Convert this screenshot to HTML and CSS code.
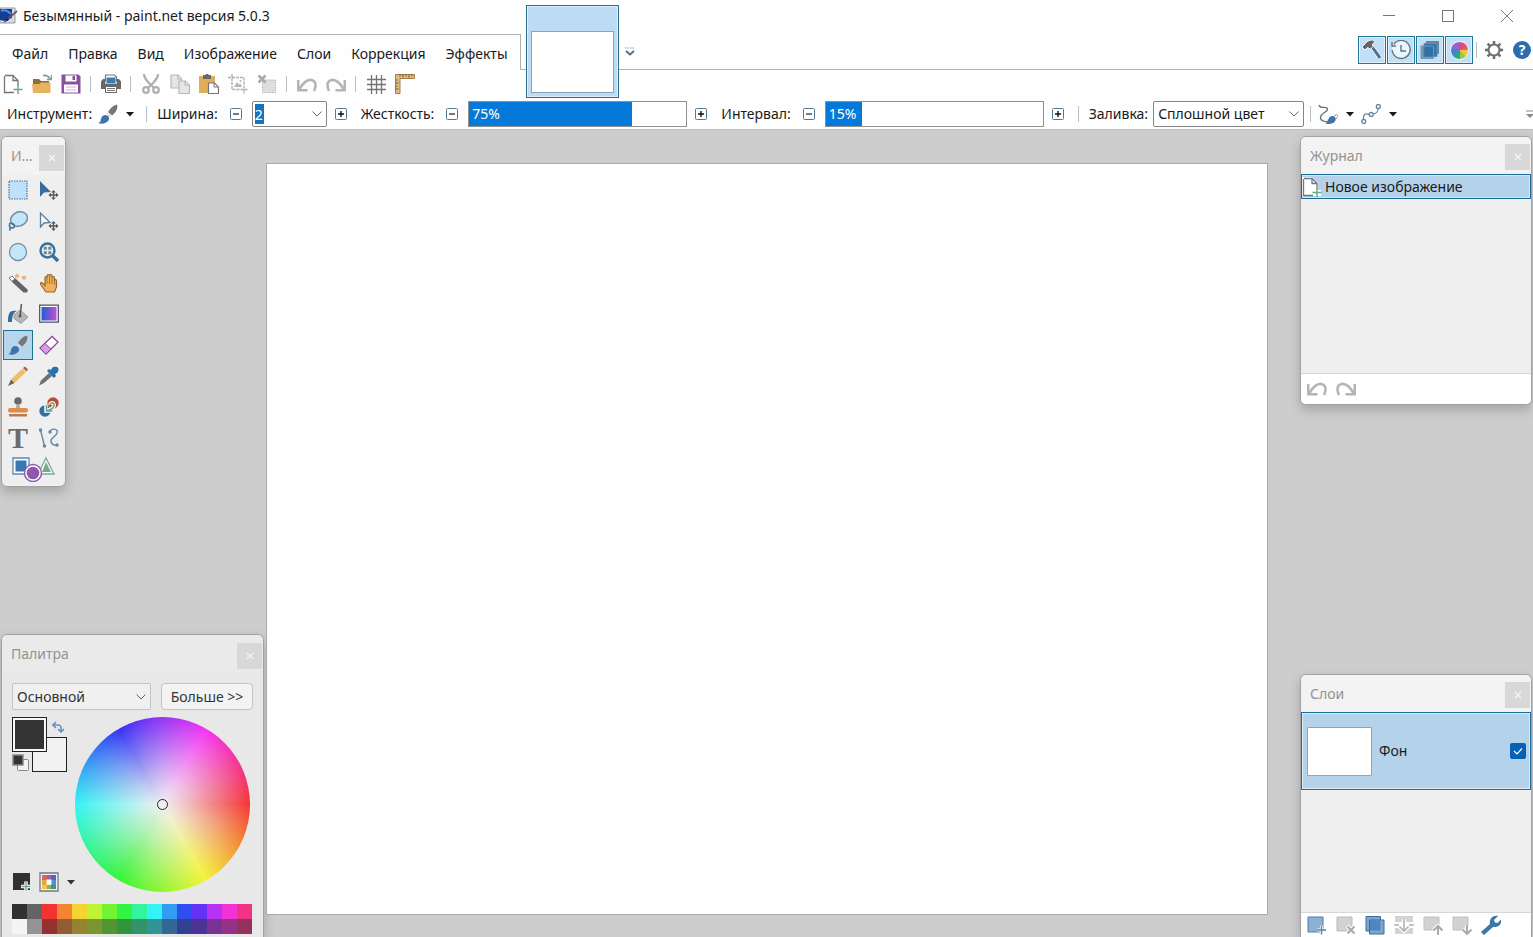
FILE: index.html
```html
<!DOCTYPE html>
<html lang="ru">
<head>
<meta charset="utf-8">
<title>Безымянный - paint.net версия 5.0.3</title>
<link rel="stylesheet" href="styles.css">
</head>
<body>
<svg class="sprite" aria-hidden="true">
  <symbol id="i-new" viewBox="0 0 20 20"><path d="M2 1.500h8l5 5v5M11 18.500H1.500V2" fill="none" stroke="#737679" stroke-width="1.300"/><path d="M10 1.500v5h5" fill="none" stroke="#737679" stroke-width="1.300"/><path d="M15 11v9M10.500 15.500h9" stroke="#67a88c" stroke-width="1.400"/></symbol>
  <symbol id="i-open" viewBox="0 0 20 20"><path d="M1 5h6l2 2h8v11H1z" fill="#8b6f3c"/><path d="M0 10h7l2-1.500h9.500V19H1z" fill="#e6b45e"/><path d="M11 1.500c3-.5 5.500.5 7 3.500M19.500 1v4.500H15" fill="none" stroke="#67a88c" stroke-width="1.500"/></symbol>
  <symbol id="i-save" viewBox="0 0 20 20"><path d="M.5.500h17l2 2v17H.5z" fill="#8a519b"/><path d="M4.500 1.500h11v6h-11zM3 10.500h14v8H3z" fill="#fff"/><path d="M11.500 2h2.500v4h-2.500z" fill="#8a519b"/><path d="M5 13h10M5 16h10" stroke="#c9b2d0"/></symbol>
  <symbol id="i-print" viewBox="0 0 20 20"><path d="M4.500 8V1h9l2 2v5" fill="#fff" stroke="#777" stroke-width="1.200"/><path d="M5.500 3.500h9V9h-9z" fill="#3a7bb4"/><path d="M0 7.500 2 5h2v4.500h12V5h2l2 2.500V15H0z" fill="#686868"/><path d="M4.500 12.500h11v6h-11z" fill="#fff" stroke="#686868"/><path d="M6 14.500h8M6 16.500h8" stroke="#777"/></symbol>
  <symbol id="i-cut" viewBox="0 0 20 20"><g fill="none" stroke="#b0b0b0" stroke-width="2.200"><path d="M3 0c0 5 4 8 9.500 13.500M17 0c0 5-4 8-9.500 13.500"/><circle cx="5" cy="16" r="2.800"/><circle cx="15" cy="16" r="2.800"/></g></symbol>
  <symbol id="i-copy" viewBox="0 0 20 20"><g fill="#e6e6e6" stroke="#b8b8b8" stroke-width="1.200"><path d="M1 1h7l3.500 3.500V14H1z"/><path d="M8 1v4h4M9 7h6.500l4 4v8.500H9z"/><path d="M15 7v4h4"/></g></symbol>
  <symbol id="i-paste" viewBox="0 0 20 20"><path d="M0 2h16v17H0z" fill="#e2ad5a"/><path d="M4 1h2.500a1.500 1.500 0 0 1 3 0H12v4H4z" fill="#696969"/><path d="M9.500 9h6l4 4v6.500h-10z" fill="#fff" stroke="#737679" stroke-width="1.200"/><path d="M15 9v4h4" fill="none" stroke="#737679"/></symbol>
  <symbol id="i-crop" viewBox="0 0 20 20"><path d="M4 0v15.500h16M0 3.500h16V20" fill="none" stroke="#b0b0b0" stroke-width="1.400" stroke-dasharray="3 1"/><path d="m6 13 3-5 2 3 1-2 2 4z" fill="#b4b4b4"/><circle cx="12.500" cy="7" r="1" fill="#b4b4b4"/></symbol>
  <symbol id="i-desel" viewBox="0 0 20 20"><path d="M5.500 6h13v12.500h-13z" fill="#dedede" stroke="#b2b2b2" stroke-dasharray="1.500 1"/><path d="m1.500 1.500 7 7m0-7-7 7" stroke="#aaa" stroke-width="2.500"/></symbol>
  <symbol id="i-undo" viewBox="0 0 20 20"><path d="M1.200 6v10.300h9.300M2 15.500C6 9 10 5 14.500 6c4.500 1 5 5.500 2.500 11" fill="none" stroke="#b5b5b5" stroke-width="2.600"/></symbol>
  <symbol id="i-redo" viewBox="0 0 20 20"><path d="M18.800 6v10.300H9.500M18 15.500C14 9 10 5 5.500 6 1 7 .5 11.500 3 17" fill="none" stroke="#b5b5b5" stroke-width="2.600"/></symbol>
  <symbol id="i-grid" viewBox="0 0 20 20"><path d="M5.500 1v19M10.500 1v19M15.500 1v19M1 5.500h19M1 10.500h19M1 15.500h19" stroke="#737373" stroke-width="1.300"/></symbol>
  <symbol id="i-ruler" viewBox="0 0 20 20"><path d="M.5.500h19v4H5v15H.5z" fill="#dfbd83" stroke="#a87d4b"/><path d="M5 .5v2M8 .5v3M11 .5v2M14 .5v3M17 .5v2M.5 6h2M.5 9h3M.5 12h2M.5 15h3" stroke="#765736"/></symbol>
  <symbol id="i-brush" viewBox="0 0 20 20"><path d="M19 .5c1.500 4-2 9-5 11L10 8C12 4.500 15 1.500 19 .5z" fill="#777"/><path d="m9.500 9 3.500 3-1 1-3.500-3z" fill="#d7d7d7"/><path d="M7.500 11c3.500.5 4.500 3 3 5.500C8.500 19.500 4 20.500 0 19c2.500-.5 2.500-2 3-4 .7-2.500 2-4 4.500-4z" fill="#3f73ab"/></symbol>
  <symbol id="i-minus" viewBox="0 0 12 12"><rect x=".5" y=".5" width="11" height="11" rx="1" fill="#fff" stroke="#58788f"/><path d="M3 6h6" stroke="#222" stroke-width="1.200"/></symbol>
  <symbol id="i-plus" viewBox="0 0 12 12"><rect x=".5" y=".5" width="11" height="11" rx="1" fill="#fff" stroke="#58788f"/><path d="M3 6h6M6 3v6" stroke="#111" stroke-width="1.400"/></symbol>
  <symbol id="i-arrow" viewBox="0 0 8 5"><path d="M0 0h8L4 4.500z" fill="currentColor"/></symbol>
  <symbol id="i-chev" viewBox="0 0 10 6"><path d="m.5.500 4.500 4.500L9.500.500" fill="none" stroke="#666"/></symbol>
  <symbol id="i-smooth" viewBox="0 0 20 20"><path d="M1 1c1 5 8 0 8.500 4C10 8 3 9 2.500 13S7 18 10 17.500" fill="none" stroke="#677780" stroke-width="1.300"/><path d="M7 19.500c4-1 2.500-7 7-7.500 4-.2 5 4 2 6.500-2 1.500-6 2-9 1z" fill="#3f73a9"/><path d="m16 12 2.500-1.500 1.500 2-2 2.500" fill="none" stroke="#8a9aa5"/></symbol>
  <symbol id="i-curve" viewBox="0 0 20 20"><g fill="none" stroke="#6287a9" stroke-width="1.300"><path d="M2.500 16C2 6 8 11.500 10 10.500s7.500 0 7-6.500"/><circle cx="17.300" cy="2.500" r="2"/><circle cx="10.200" cy="10.500" r="2" fill="#fff"/><circle cx="2.700" cy="17.500" r="2" fill="#fff"/></g></symbol>
  <symbol id="i-hammer" viewBox="0 0 20 20"><path d="m8 7 3-2 8 11c1 2-1.500 4-3 2.500z" fill="#4d7396" stroke="#edf6fc"/><path d="m10 5 3-3.500L10.500 0C7 0 4.500 1.500 3 4L0 7l3 3 2.500-2.500L8.500 9l3-3z" fill="#656565" stroke="#edf6fc"/></symbol>
  <symbol id="i-history" viewBox="0 0 20 20"><circle cx="10" cy="10" r="9" fill="#e9f6fd"/><path d="M3 4a9 9 0 1 1-1.800 6M1 2v4h4M10 5v6h5" fill="none" stroke="#68747a" stroke-width="1.400"/></symbol>
  <symbol id="i-layers" viewBox="0 0 20 20"><path d="M6 1h13v13H6z" fill="#6d8493"/><path d="M4 3.500h13v13H4z" fill="#2f74b3" stroke="#5d8eb5"/><path d="M1 6h12.500v12.500H1z" fill="#386e9b" fill-opacity=".6" stroke="#6d98bb"/></symbol>
  <symbol id="i-gear" viewBox="0 0 20 20"><g fill="none" stroke="#6c6c6c"><circle cx="10" cy="10" r="5.500" stroke-width="2"/><path d="M10 1v3M10 16v3M1 10h3M16 10h3M3.600 3.600l2.200 2.200M14.200 14.200l2.200 2.200M3.600 16.400l2.200-2.200M14.200 5.800l2.200-2.200" stroke-width="2.500"/></g></symbol>
  <symbol id="i-rect" viewBox="0 0 20 20"><path d="M1 1h18v18H1z" fill="#bfe1fb" stroke="#4c7394" stroke-width="1.200" stroke-dasharray="1.500 1"/></symbol>
  <symbol id="i-lasso" viewBox="0 0 20 20"><ellipse cx="11" cy="8" rx="8.700" ry="7" transform="rotate(-25 11 8)" fill="#c4e6fb" stroke="#7892a5" stroke-width="1.600"/><path d="M1.500 19.500c1.500-2 .5-4-.5-5.500M1 13.500c2-2 5.500-1 5.500 1.500 0 2-3 2.500-4.500 1" fill="none" stroke="#467499" stroke-width="1.700"/></symbol>
  <symbol id="i-ellipse" viewBox="0 0 20 20"><circle cx="10" cy="10" r="8.500" fill="#c4e6fb" stroke="#7892a5" stroke-width="1.300"/></symbol>
  <symbol id="i-cross" viewBox="0 0 20 20"><path d="M14.500 11v8M10.500 15h8" stroke="#555" stroke-width="1.300"/><path d="m14.500 10 2.300 2.500h-4.600zM14.500 20l2.300-2.500h-4.600zM9.500 15l2.500-2.300v4.600zM19.500 15 17 12.700v4.600z" fill="#555"/></symbol>
  <symbol id="i-move" viewBox="0 0 20 20"><path d="M1 1v16l4-4.500 7-.5z" fill="#376c9f"/><use href="#i-cross"/></symbol>
  <symbol id="i-movesel" viewBox="0 0 20 20"><path d="M1.500 2v14L5 12l6-.5z" fill="#f4fafe" stroke="#5a7f9e" stroke-width="1.300"/><use href="#i-cross"/></symbol>
  <symbol id="i-zoom" viewBox="0 0 20 20"><path d="m13 13 6 6" stroke="#36719f" stroke-width="3.400"/><circle cx="8.500" cy="8.500" r="7" fill="#e4edf2" stroke="#36719f" stroke-width="2.400"/><path d="M4.800 4.800h3v3h-3zM9.300 4.800h3v3h-3zM4.800 9.300h3v3h-3zM9.300 9.300h3v3h-3z" fill="#74858f"/></symbol>
  <symbol id="i-wand" viewBox="0 0 20 20"><path d="m1 5 3-2 3 3-3 2.500z" fill="#fff" stroke="#777"/><path d="m3.500 8.500 4-3L20 17l-1 2.500h-3.500z" fill="#646464"/><path d="m9 0 1 2h2l-1.500 1.300.5 2L9 4.200l-2 1.100.5-2L6 2h2zM16 2l.8 1.600h2l-1.300 1.300.5 2-2-1-2 1 .5-2L13 3.600h2z" fill="#e5af65"/></symbol>
  <symbol id="i-hand" viewBox="0 0 20 20"><path d="M7 19 2 12c-1.500-2 .5-3.500 2-1.500l2 2V5c0-2 2-2 2 0V3c0-2 2.500-2 2.500 0v0c0-2 2.500-2 2.500 0v2c0-2 2.500-2 2.500 0v3c0-2 2-2 2 0v6l-2 5z" fill="#f0b35c" stroke="#98672f" stroke-width="1.200"/><path d="M8 5v6M10.500 3v8M13 5v6M15.500 8v4" stroke="#a97336"/></symbol>
  <symbol id="i-fill" viewBox="0 0 20 20"><path d="m6 11 6-5 8 7-7 6.500-7-5z" fill="#b6b6b6" stroke="#999"/><path d="M13.500 0 12 12" stroke="#555" stroke-width="1.500"/><circle cx="12" cy="12" r="1.500" fill="#555"/><path d="M0 18C0 8 2 6 9 7c-4 2-4.500 4-5 11z" fill="#376c9f"/></symbol>
  <symbol id="i-gradient" viewBox="0 0 20 20"><linearGradient id="g-tool"><stop stop-color="#1e5ed2"/><stop offset="1" stop-color="#c64ed3"/></linearGradient><path d="M.7 1.200h18.600v17H.7z" fill="#fff" stroke="#50516a" stroke-width="1.300"/><path d="M2.500 3h15v13.500h-15z" fill="url(#g-tool)"/></symbol>
  <symbol id="i-eraser" viewBox="0 0 20 20"><path d="M1 13 13 1.500l6 5.500L7 19z" fill="#fff" stroke="#894d9d" stroke-width="1.300"/><path d="m1 13 5-4.500 6 5.500-5 5z" fill="#d79be4" stroke="#894d9d"/></symbol>
  <symbol id="i-pencil" viewBox="0 0 20 20"><path d="M3 13.500 14.500 2.500 18 6 6.500 17z" fill="#ecbd6c"/><path d="M15 2 17 .5 20 3.500 18.500 5.500z" fill="#ac6050"/><path d="M3 13.500 0 20l6.500-3z" fill="#6b6257"/></symbol>
  <symbol id="i-picker" viewBox="0 0 20 20"><path d="m0 19.500 2-5L10 7l3 3-8 7z" fill="#6b7074"/><path d="m8 5 2-2 2 1c1-3 3-4 6-3 2 1 2 4 0 6l-2 1 1 2-2 2z" fill="#2f6fa7"/></symbol>
  <symbol id="i-stamp" viewBox="0 0 20 20"><circle cx="10" cy="4" r="3.800" fill="#696969"/><path d="M8.500 7h3l.5 5H8z" fill="#aaa"/><rect y="11" width="20" height="4.500" rx="2" fill="#df8c49"/><path d="M1 17h18v2.500H1z" fill="#b97953"/></symbol>
  <symbol id="i-recolor" viewBox="0 0 20 20"><circle cx="14" cy="6" r="5.700" fill="#bd4b32"/><circle cx="6" cy="14" r="5.700" fill="#326fa8"/><path d="M7 8v6h6M7 14c6-2 9-4 8-7-1-2-4-1-4 1" fill="none" stroke="#fff" stroke-width="3.500"/><path d="M7.500 8v6h6M7.500 14c6-2 8.500-4 7.500-7-1-2-4-1-4 1" fill="none" stroke="#69a58a" stroke-width="1.600"/></symbol>
  <symbol id="i-line" viewBox="0 0 20 20"><g fill="none" stroke="#6087ae" stroke-width="1.400"><path d="m1.500 2 4 16M11 4c0-4 9-4 7 1-1 4-6 4-6 8 0 4 5 5 7 4"/><circle cx="1.500" cy="2" r="1"/><circle cx="5.500" cy="18" r="1"/><circle cx="11" cy="4" r="1"/><circle cx="18" cy="17" r="1"/></g></symbol>
  <symbol id="i-shapes" viewBox="0 0 44 26"><path d="M1 2h16v16H1z" fill="#fff" stroke="#5989b2" stroke-width="1.300"/><path d="M3.500 4.500h11v11h-11z" fill="#3977b0"/><path d="m34 2 8 16H26z" fill="#fff" stroke="#75ac8f" stroke-width="1.300"/><path d="m34 6 5 10h-9z" fill="#74ac8c"/><circle cx="21" cy="17" r="8.500" fill="#fff" stroke="#925cab" stroke-width="1.500"/><circle cx="21" cy="17" r="6.300" fill="#8e58ad"/></symbol>
  <symbol id="i-swap" viewBox="0 0 12 12"><path d="M1 4h5q3 0 3 3v4M4 1 1 4l3 3M6 8l3 3 3-3" fill="none" stroke="#6a91bd" stroke-width="1.600"/></symbol>
  <symbol id="i-x" viewBox="0 0 8 8"><path d="m1 1 6 6m0-6-6 6" stroke="#f5f5f5" stroke-width="1.200"/></symbol>
  <symbol id="i-ladd" viewBox="0 0 20 20"><path d="M1 2h15v15H1z" fill="#8cb1d5" stroke="#4c7ca8"/><path d="M14.500 10.500v9M10 15h9" stroke="#fff" stroke-width="3"/><path d="M14.500 10.500v9M10 15h9" stroke="#5a83a3" stroke-width="1.400"/></symbol>
  <symbol id="i-ldel" viewBox="0 0 20 20"><path d="M1 2h15v14H1z" fill="#d2d2d2" stroke="#bbb"/><path d="m11 11 8 8m0-8-8 8" stroke="#fff" stroke-width="4"/><path d="m11.500 11.500 7 7m0-7-7 7" stroke="#aaa" stroke-width="2.200"/></symbol>
  <symbol id="i-ldup" viewBox="0 0 20 20"><path d="M1 1.500h14.500V16H1z" fill="#7fa5cc" stroke="#356e9f"/><path d="M4.500 5H19v14H4.500z" fill="#7fa5cc" stroke="#356e9f"/><path d="M5 5.500h10.500v10H5z" fill="#4f86c0"/></symbol>
  <symbol id="i-lmerge" viewBox="0 0 20 20"><path d="M1 1h18v6H1zM1 13h18v6H1z" fill="#d4d4d4"/><path d="M10 4v12M5.500 11.500 10 16l4.500-4.500" fill="none" stroke="#fff" stroke-width="4"/><path d="M10 4v12M5.500 11.500 10 16l4.500-4.500M0 10h5M15 10h5" fill="none" stroke="#b0b0b0" stroke-width="1.600"/></symbol>
  <symbol id="i-lup" viewBox="0 0 20 20"><path d="M1 2h15v13H1z" fill="#d2d2d2" stroke="#c0c0c0"/><path d="M15 20v-8m-4.500 3.500L15 11l4.500 4.500" fill="none" stroke="#fff" stroke-width="4"/><path d="M15 20v-8m-4.500 3.500L15 11l4.500 4.500" fill="none" stroke="#aaa" stroke-width="2"/></symbol>
  <symbol id="i-ldown" viewBox="0 0 20 20"><path d="M1 2h15v13H1z" fill="#d2d2d2" stroke="#c0c0c0"/><path d="M15 10v8m-4.500-3.500L15 19l4.500-4.500" fill="none" stroke="#fff" stroke-width="4"/><path d="M15 10v8m-4.500-3.500L15 19l4.500-4.500" fill="none" stroke="#aaa" stroke-width="2"/></symbol>
  <symbol id="i-wrench" viewBox="0 0 20 20"><path d="M0 17 9 9C8 5 11 0 17 1l-4 4 1 2.500 2.500.5L20 4.500c1 5-3 8-8 7.500L3 20z" fill="#3b76a9"/></symbol>
</svg>

<header class="chrome">
  <div class="titlebar">
    <svg class="logo" viewBox="0 0 18 18"><path d="M0 1h15v15H0z" fill="#d8dce8" stroke="#999"/><path d="M0 2h12v9L4 14l-4-1z" fill="#123f96"/><path d="M1 4c4-2 7 0 10 3" fill="none" stroke="#4d91dd" stroke-width="2"/><path d="m17 4-9 8" stroke="#765263" stroke-width="1.800"/><path d="m8 11-5 5 6-3z" fill="#111c38"/></svg>
    <h1 class="title">Безымянный - paint.net версия 5.0.3</h1>
    <div class="window-buttons">
      <button aria-label="Свернуть"><svg viewBox="0 0 12 12"><path d="M0 5.500h12" stroke="#777"/></svg></button>
      <button aria-label="Развернуть"><svg viewBox="0 0 12 12"><rect x=".5" y=".5" width="11" height="11" fill="none" stroke="#777"/></svg></button>
      <button aria-label="Закрыть"><svg viewBox="0 0 12 12"><path d="m0 0 12 12m0-12L0 12" stroke="#777"/></svg></button>
    </div>
  </div>
  <div class="menurow">
    <nav class="menu">
      <button>Файл</button><button>Правка</button><button>Вид</button><button>Изображение</button><button>Слои</button><button>Коррекция</button><button>Эффекты</button>
    </nav>
    <div class="docs">
      <button class="doc-thumb" aria-label="Безымянный"><span></span></button>
      <button class="doc-list" aria-label="Список изображений"><svg viewBox="0 0 10 10"><path d="M0 1h10" stroke="#8a9aa6" stroke-dasharray="1.500 1"/><path d="m1 4 4 3.500L9 4" fill="none" stroke="#4f6f86" stroke-width="1.800"/></svg></button>
      <div class="toggles">
        <button class="toggle" aria-label="Инструменты"><svg class="icon"><use href="#i-hammer"/></svg></button>
        <button class="toggle" aria-label="Журнал"><svg class="icon"><use href="#i-history"/></svg></button>
        <button class="toggle" aria-label="Слои"><svg class="icon"><use href="#i-layers"/></svg></button>
        <button class="toggle" aria-label="Палитра"><span class="wheel-icon"></span></button>
        <span class="sep"></span>
        <button class="plain" aria-label="Настройки"><svg class="icon"><use href="#i-gear"/></svg></button>
        <button class="plain help" aria-label="Справка">?</button>
      </div>
    </div>
  </div>
  <div class="toolbar">
    <button aria-label="Создать"><svg class="icon"><use href="#i-new"/></svg></button>
    <button aria-label="Открыть"><svg class="icon"><use href="#i-open"/></svg></button>
    <button aria-label="Сохранить"><svg class="icon"><use href="#i-save"/></svg></button>
    <span class="sep"></span>
    <button aria-label="Печать"><svg class="icon"><use href="#i-print"/></svg></button>
    <span class="sep"></span>
    <button aria-label="Вырезать"><svg class="icon"><use href="#i-cut"/></svg></button>
    <button aria-label="Копировать"><svg class="icon"><use href="#i-copy"/></svg></button>
    <button aria-label="Вставить"><svg class="icon"><use href="#i-paste"/></svg></button>
    <button aria-label="Обрезать"><svg class="icon"><use href="#i-crop"/></svg></button>
    <button aria-label="Снять выделение"><svg class="icon"><use href="#i-desel"/></svg></button>
    <span class="sep"></span>
    <button aria-label="Отменить"><svg class="icon"><use href="#i-undo"/></svg></button>
    <button aria-label="Вернуть"><svg class="icon"><use href="#i-redo"/></svg></button>
    <span class="sep"></span>
    <button aria-label="Сетка"><svg class="icon"><use href="#i-grid"/></svg></button>
    <button aria-label="Линейки"><svg class="icon"><use href="#i-ruler"/></svg></button>
  </div>
  <div class="options">
    <div class="group tool-group">
      <span>Инструмент:</span>
      <button class="drop" aria-label="Кисть"><svg class="icon"><use href="#i-brush"/></svg><svg class="arrow"><use href="#i-arrow"/></svg></button>
    </div>
    <span class="sep"></span>
    <div class="group numeric">
      <label for="width">Ширина:</label>
      <button class="step" aria-label="Уменьшить ширину"><svg><use href="#i-minus"/></svg></button>
      <div class="combo width"><input id="width" type="text" value="2"><svg class="chev"><use href="#i-chev"/></svg></div>
      <button class="step" aria-label="Увеличить ширину"><svg><use href="#i-plus"/></svg></button>
    </div>
    <div class="group numeric">
      <label for="hard">Жесткость:</label>
      <button class="step" aria-label="Уменьшить жесткость"><svg><use href="#i-minus"/></svg></button>
      <div class="slider" style="--value: 75%"><input id="hard" type="range" value="75"><output for="hard">75%</output></div>
      <button class="step" aria-label="Увеличить жесткость"><svg><use href="#i-plus"/></svg></button>
    </div>
    <div class="group numeric">
      <label for="spacing">Интервал:</label>
      <button class="step" aria-label="Уменьшить интервал"><svg><use href="#i-minus"/></svg></button>
      <div class="slider" style="--value: 16.5%"><input id="spacing" type="range" value="15"><output for="spacing">15%</output></div>
      <button class="step" aria-label="Увеличить интервал"><svg><use href="#i-plus"/></svg></button>
    </div>
    <span class="sep"></span>
    <div class="group fill-group">
      <label for="fill">Заливка:</label>
      <div class="combo fill"><select id="fill"><option>Сплошной цвет</option></select><svg class="chev"><use href="#i-chev"/></svg></div>
    </div>
    <span class="sep"></span>
    <div class="group modes">
      <button class="drop" aria-label="Сглаживание"><svg class="icon"><use href="#i-smooth"/></svg><svg class="arrow"><use href="#i-arrow"/></svg></button>
      <button class="drop" aria-label="Кривая"><svg class="icon"><use href="#i-curve"/></svg><svg class="arrow"><use href="#i-arrow"/></svg></button>
    </div>
    <button class="overflow" aria-label="Ещё"><svg viewBox="0 0 8 8"><path d="M0 1h8" stroke="#888"/><path d="M0 4h8L4 8z" fill="#888"/></svg></button>
  </div>
</header>

<main class="workspace">
  <div class="dock left">
    <section class="panel tools">
      <div class="panel-head"><h2>И...</h2><button aria-label="Закрыть"><svg><use href="#i-x"/></svg></button></div>
      <div class="tool-grid">
        <button aria-label="Прямоугольное выделение"><svg class="icon"><use href="#i-rect"/></svg></button>
        <button aria-label="Перемещение"><svg class="icon"><use href="#i-move"/></svg></button>
        <button aria-label="Лассо"><svg class="icon"><use href="#i-lasso"/></svg></button>
        <button aria-label="Перемещение выделения"><svg class="icon"><use href="#i-movesel"/></svg></button>
        <button aria-label="Овальное выделение"><svg class="icon"><use href="#i-ellipse"/></svg></button>
        <button aria-label="Масштаб"><svg class="icon"><use href="#i-zoom"/></svg></button>
        <button aria-label="Волшебная палочка"><svg class="icon"><use href="#i-wand"/></svg></button>
        <button aria-label="Рука"><svg class="icon"><use href="#i-hand"/></svg></button>
        <button aria-label="Заливка"><svg class="icon"><use href="#i-fill"/></svg></button>
        <button aria-label="Градиент"><svg class="icon"><use href="#i-gradient"/></svg></button>
        <button class="active" aria-label="Кисть"><svg class="icon"><use href="#i-brush"/></svg></button>
        <button aria-label="Ластик"><svg class="icon"><use href="#i-eraser"/></svg></button>
        <button aria-label="Карандаш"><svg class="icon"><use href="#i-pencil"/></svg></button>
        <button aria-label="Пипетка"><svg class="icon"><use href="#i-picker"/></svg></button>
        <button aria-label="Штамп"><svg class="icon"><use href="#i-stamp"/></svg></button>
        <button aria-label="Перекрашивание"><svg class="icon"><use href="#i-recolor"/></svg></button>
        <button class="text-tool" aria-label="Текст">T</button>
        <button aria-label="Линия"><svg class="icon"><use href="#i-line"/></svg></button>
        <button class="shapes" aria-label="Фигуры"><svg><use href="#i-shapes"/></svg></button>
      </div>
    </section>

    <section class="panel palette">
      <div class="panel-head"><h2>Палитра</h2><button aria-label="Закрыть"><svg><use href="#i-x"/></svg></button></div>
      <div class="palette-body">
        <div class="palette-top">
          <div class="combo"><select aria-label="Цвет"><option>Основной</option></select><svg class="chev"><use href="#i-chev"/></svg></div>
          <button class="more">Больше &gt;&gt;</button>
        </div>
        <div class="picker">
          <div class="picker-side">
            <div class="swatches">
              <button class="secondary" aria-label="Дополнительный цвет"></button>
              <button class="primary" aria-label="Основной цвет"></button>
              <button class="swap" aria-label="Поменять цвета"><svg><use href="#i-swap"/></svg></button>
              <button class="reset" aria-label="Чёрный и белый"><svg viewBox="0 0 18 18"><rect x="5.500" y="5.500" width="11" height="11" rx="1" fill="#f2f2f2" stroke="#888"/><rect x="1" y="1" width="10" height="10" fill="#333" stroke="#888" stroke-width="1.500"/></svg></button>
            </div>
            <div class="palette-actions">
              <button aria-label="Добавить цвет"><svg class="icon" viewBox="0 0 20 20"><path d="M1 1h17v17H1z" fill="#303030"/><path d="M14 9.500v10M9 14.500h10" stroke="#fff" stroke-width="3.500"/><path d="M14 10v9M9.500 14.500h9" stroke="#70a18d" stroke-width="1.300"/></svg></button>
              <button class="drop" aria-label="Палитры"><svg class="icon" viewBox="0 0 20 20"><path d="M1 1h18v18H1z" fill="#eef1f8" stroke="#727987" stroke-width="1.300"/><path d="M3 3h5v5H3z" fill="#d8655c"/><path d="M8 3h4v5H8z" fill="#9b61a3"/><path d="M12 3h5v5h-5z" fill="#5868ad"/><path d="M3 8h5v5H3z" fill="#eba33d"/><path d="M12 8h5v5h-5z" fill="#4f91cc"/><path d="M3 13h5v4H3z" fill="#f0c645"/><path d="M8 13h4v4H8z" fill="#86b553"/><path d="M12 13h5v4h-5z" fill="#44966b"/><path d="M7.500 7.500h5v5h-5z" fill="#fff"/></svg><svg class="arrow"><use href="#i-arrow"/></svg></button>
            </div>
          </div>
          <div class="wheel"><span class="pin"></span></div>
        </div>
        <div class="colors">
          <i style="background:#303030"></i><i style="background:#646464"></i><i style="background:#f43232"></i><i style="background:#f48432"></i><i style="background:#f4d432"></i><i style="background:#c0f432"></i><i style="background:#72f432"></i><i style="background:#32f444"></i><i style="background:#32f49c"></i><i style="background:#32f4f4"></i><i style="background:#329cf0"></i><i style="background:#324cf4"></i><i style="background:#6432f4"></i><i style="background:#b832f4"></i><i style="background:#f432d8"></i><i style="background:#f43284"></i>
          <i style="background:#f4f4f4"></i><i style="background:#949494"></i><i style="background:#943232"></i><i style="background:#945c32"></i><i style="background:#948432"></i><i style="background:#7c9432"></i><i style="background:#549432"></i><i style="background:#32943c"></i><i style="background:#329468"></i><i style="background:#329494"></i><i style="background:#326894"></i><i style="background:#324094"></i><i style="background:#4c3294"></i><i style="background:#783294"></i><i style="background:#943288"></i><i style="background:#94325c"></i>
        </div>
      </div>
    </section>
  </div>

  <div class="canvas"></div>

  <div class="dock right">
    <section class="panel history">
      <div class="panel-head"><h2>Журнал</h2><button aria-label="Закрыть"><svg><use href="#i-x"/></svg></button></div>
      <ul class="history-list"><li><svg class="icon" viewBox="0 0 20 20"><path d="M0 0h10l6 6v7h3v6H0z" fill="#fff"/><use href="#i-new"/></svg>Новое изображение</li></ul>
      <div class="panel-foot">
        <button aria-label="Отменить"><svg class="icon"><use href="#i-undo"/></svg></button>
        <button aria-label="Вернуть"><svg class="icon"><use href="#i-redo"/></svg></button>
      </div>
    </section>
    <section class="panel layers">
      <div class="panel-head"><h2>Слои</h2><button aria-label="Закрыть"><svg><use href="#i-x"/></svg></button></div>
      <label class="layer"><span class="layer-thumb"></span><span class="layer-name">Фон</span><span class="check"><input type="checkbox" checked><svg viewBox="0 0 16 16"><path d="m4 8 3 3 5-5.500" fill="none" stroke="#fff" stroke-width="1.200"/></svg></span></label>
      <div class="panel-foot">
        <button aria-label="Добавить слой"><svg class="icon"><use href="#i-ladd"/></svg></button>
        <button aria-label="Удалить слой"><svg class="icon"><use href="#i-ldel"/></svg></button>
        <button aria-label="Дублировать слой"><svg class="icon"><use href="#i-ldup"/></svg></button>
        <button aria-label="Объединить"><svg class="icon"><use href="#i-lmerge"/></svg></button>
        <button aria-label="Выше"><svg class="icon"><use href="#i-lup"/></svg></button>
        <button aria-label="Ниже"><svg class="icon"><use href="#i-ldown"/></svg></button>
        <button aria-label="Свойства"><svg class="icon"><use href="#i-wrench"/></svg></button>
      </div>
    </section>
  </div>
</main>
</body>
</html>
```
FILE: styles.css
```css
* { box-sizing: border-box; }

body {
  margin: 0;
  height: 100vh;
  display: flex;
  flex-direction: column;
  overflow: hidden;
  font: 14px/20px "Noto Sans", "Open Sans", sans-serif;
  color: #1a1a1a;
  background: #cdcdcd;
}

button, input, select { font: inherit; color: inherit; margin: 0; }
button { padding: 0; border: 0; background: none; display: flex; align-items: center; justify-content: center; flex: none; }
svg { display: block; flex: none; overflow: visible; }
.sprite { position: absolute; width: 0; height: 0; }
.icon { width: 20px; height: 20px; }
.arrow { width: 8px; height: 5px; }
.chev { width: 10px; height: 6px; }
.sep { width: 1px; height: 16px; background: #b4c0c6; flex: none; }

/* Title, menu and toolbars */
.chrome { background: #fefefe; border-bottom: 1px solid #bcbcbc; }
.titlebar { display: flex; align-items: center; height: 34px; padding: 0 20px 3px 0; }
.logo { width: 18px; height: 18px; }
.title { margin: 0 0 0 5px; font-size: 14px; font-weight: 400; flex: 1; }
.window-buttons { display: flex; gap: 47px; }
.window-buttons svg { width: 12px; height: 12px; }

.menurow { display: flex; height: 36px; }
.menu { display: flex; gap: 20px; padding: 2px 12px 0 12px; border: solid #b0b0b0; border-width: 1px 1px 0 0; }
.docs { flex: 1; display: flex; position: relative; border-bottom: 1px solid #b0b0b0; padding-left: 104px; }
.doc-thumb {
  position: absolute; left: 5px; top: -29px; width: 93px; height: 93px;
  border: 1px solid #2a7189; background: #bddcf4; box-shadow: inset 0 0 0 1px #dceefb;
  align-items: flex-end; padding: 4px;
}
.doc-thumb span { width: 83px; height: 62px; background: #fff; border: 1px solid #8aa4bb; }
.doc-list svg { width: 10px; height: 10px; }
.toggles { margin-left: auto; display: flex; align-items: center; gap: 1px; padding: 0 2px 3px 0; }
.toggle { width: 28px; height: 28px; border: 1px solid #1f7794; background: #bfe0f6; box-shadow: inset 0 0 0 1px #dff1fc; }
.wheel-icon { width: 19px; height: 19px; border-radius: 50%; border: 1px solid #eef; background: conic-gradient(#dc4b73 0 45deg, #e96a5b 90deg, #f2c442 90deg 135deg, #97c755 135deg 180deg, #2aa875 180deg 225deg, #4382cf 225deg 290deg, #9c5fd0 290deg); }
.toggles .sep { margin: 0 6px 0 2px; }
.help { width: 18px; height: 18px; margin-left: 8px; border-radius: 50%; background: #2c6cab; color: #fff; font-weight: 700; }

.toolbar { display: flex; align-items: center; gap: 9px; height: 30px; padding: 0 0 2px 3px; }
.toolbar .sep { width: 2px; background: linear-gradient(90deg, #b4c0c6 1px, transparent 1px); }

.options { display: flex; align-items: center; height: 29px; padding: 0 0 1px 7px; gap: 10px; }
.group { display: flex; align-items: center; gap: 10px; margin-right: 4px; }
.numeric label { margin-right: 2px; }
.numeric .step:last-child { margin-left: -2px; }
.tool-group { gap: 6px; margin-right: 2px; }
.fill-group { gap: 5px; margin-right: -4px; }
.drop { gap: 8px; }
.modes { gap: 7px; margin-left: -3px; }
.step, .step svg { width: 12px; height: 12px; }
.combo { display: grid; align-items: center; height: 26px; border: 1px solid #858585; border-radius: 2px; background: #fff; }
.combo > * { grid-area: 1 / 1; }
.combo .chev { justify-self: end; margin-right: 4px; pointer-events: none; }
.combo input, .combo select { appearance: none; border: 0; outline: 0; width: 100%; height: 24px; padding: 0 4px; background: none; }
.width { width: 75px; }
.combo input { padding-left: 2px; color: #fff; background: linear-gradient(#1473c4, #1473c4) 2px 2px / 9px 20px no-repeat; }
.fill { width: 151px; }
.slider { display: grid; align-items: center; width: 219px; height: 26px; border: 1px solid #909090; background: linear-gradient(90deg, #0579d9 var(--value), #fff var(--value)); }
.slider > * { grid-area: 1 / 1; }
.slider input { appearance: none; width: 100%; height: 24px; background: none; }
.slider input::-webkit-slider-thumb { appearance: none; width: 1px; height: 24px; }
.slider output { padding-left: 3px; color: #fff; pointer-events: none; }
.overflow { margin-left: auto; width: 7px; overflow: hidden; justify-content: flex-start; }
.overflow svg { width: 8px; height: 8px; }

/* Workspace */
.workspace { flex: 1; min-height: 0; display: grid; grid-template-columns: 266px minmax(0, 1fr) 265px; }
.canvas { margin: 33px 0 22px; background: #fff; border: 1px solid #aaa; }
.dock { display: flex; flex-direction: column; justify-content: space-between; align-items: flex-start; min-height: 0; padding: 6px 1px 0; }
.right { align-items: flex-end; }

.panel { border: 1px solid #a2a2a2; border-radius: 6px; background: #efefef; box-shadow: 0 5px 12px rgba(0, 0, 0, .2); display: flex; flex-direction: column; overflow: hidden; flex: none; }
.panel-head { display: flex; align-items: center; justify-content: space-between; height: 38px; padding: 3px 1px 0 9px; background: #f3f3f3; }
.right .panel-head { height: 37px; }
.panel-head h2 { margin: 0; font-size: 14px; font-weight: 400; color: #929292; padding-bottom: 3px; }
.panel-head button { width: 25px; height: 26px; background: #d8d8d8; }
.panel-head svg { width: 8px; height: 8px; }
.panel-foot { display: flex; align-items: center; gap: 9px; height: 31px; padding-left: 6px; background: #fff; border-top: 1px solid #d6d6d6; }
.history .panel-foot { padding-bottom: 3px; }

.tools { width: 65px; }
.tool-grid { display: grid; grid-template-columns: 30px 30px; gap: 1px; padding: 0 1px 2px; }
.tool-grid button { height: 30px; }
.tool-grid .active { border: 1px solid #21708f; background: #b6d6ee; }
.tool-grid .text-tool { font: 700 30px/30px "Liberation Serif", serif; color: #6b6b6b; }
.tool-grid .shapes { grid-column: span 2; }
.shapes svg { width: 44px; height: 26px; }

.palette { width: 263px; border-bottom: 0; border-radius: 6px 6px 0 0; background: #e8e8e8; color: #333; }
.palette .panel-head { background: #eaeaea; }
.palette-body { padding: 10px 10px 3px; }
.palette-top { display: flex; gap: 10px; }
.palette-top .combo { flex: 1; height: 27px; background: #f0f0f0; border-color: #c4c4c4; }
.more { width: 92px; height: 27px; border: 1px solid #c4c4c4; border-radius: 4px; background: #f3f3f3; }
.picker { display: flex; justify-content: space-between; padding: 7px 3px 12px 0; }
.picker-side { display: flex; flex-direction: column; justify-content: space-between; }
.swatches { position: relative; width: 55px; height: 55px; }
.swatches button { position: absolute; }
.primary, .secondary { width: 35px; height: 35px; border: 1px solid #222; }
.primary { left: 0; top: 0; background: #333; box-shadow: inset 0 0 0 2px #f8f8f8; }
.secondary { left: 20px; top: 20px; background: #f2f2f2; }
.swap { left: 40px; top: 4px; }
.swap svg { width: 12px; height: 12px; }
.reset { left: 0; top: 37px; }
.reset svg { width: 18px; height: 18px; }
.palette-actions { display: flex; gap: 7px; }
.wheel {
  width: 175px; height: 175px; border-radius: 50%; display: grid; place-items: center;
  background:
    radial-gradient(closest-side, rgba(240, 240, 240, 1), rgba(240, 240, 240, .72) 30%, rgba(240, 240, 240, 0) 100%),
    conic-gradient(from 90deg, #f43434, #f4f434 60deg, #34f434 120deg, #34f4f4 180deg, #3434f4 240deg, #f434f4 300deg, #f43434);
}
.pin { width: 11px; height: 11px; border: 1px solid #222; border-radius: 50%; box-shadow: inset 0 0 0 1px #f4f4f4; }
.colors { display: grid; grid-template-columns: repeat(16, 15px); grid-auto-rows: 15px; }

.history { width: 232px; height: 269px; }
.history-list { flex: 1; margin: 0; padding: 0; list-style: none; }
.history-list li { display: flex; align-items: center; gap: 3px; height: 25px; border: 1px solid #1f6c9b; background: #b4d3ea; box-shadow: inset 0 0 0 1px #cfe6f6; }
.layers { width: 232px; height: 263px; border-bottom: 0; border-radius: 6px 6px 0 0; }
.layer { display: flex; align-items: center; height: 78px; padding: 0 4px 0 5px; border: 1px solid #1f6c9b; background: #b4d3ea; box-shadow: inset 0 0 0 1px #d9edf9; }
.layer-thumb { width: 65px; height: 49px; background: #fff; border: 1px solid #8ba5b8; border-radius: 1px; }
.layer-name { flex: 1; padding-left: 7px; }
.check { display: grid; width: 16px; height: 16px; }
.check > * { grid-area: 1 / 1; width: 16px; height: 16px; }
.check input { appearance: none; margin: 0; background: #0860b4; border-radius: 2px; }
.layers .panel-foot { margin-top: auto; height: 25px; }
```
